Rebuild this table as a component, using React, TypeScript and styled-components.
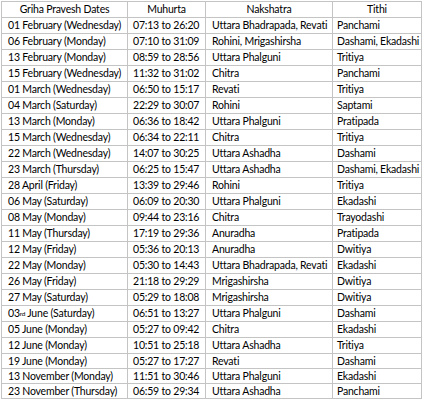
import React from 'react';
import styled, { createGlobalStyle } from 'styled-components';

const GlobalStyle = createGlobalStyle`
    html, body {
        margin: 0;
        padding: 0;
        background: #fff;
    }
    body {
        font-family: Lato, "Open Sans", "Liberation Sans", sans-serif;
    }
`;

const LINE_COLOR = '#c4c4c4';

const Page = styled.div`
    padding: 1px 0 0 1px;
`;

const Grid = styled.div`
    display: grid;
    grid-template-columns: 125px 77px 126px 88px;
    grid-template-rows: repeat(22, 15px) repeat(3, 14px);
    gap: 1px;
    padding: 1px;
    width: max-content;
    background-color: ${LINE_COLOR};
`;

type CellProps = {
    $pad: number;
};

const Cell = styled.div<CellProps>`
    display: flex;
    align-items: center;
    padding-left: ${(props) => props.$pad}px;
    background-color: #fff;
    color: #000;
    font-size: 10.5px;
    letter-spacing: -0.2px;
    line-height: 1;
    white-space: nowrap;
    overflow: hidden;
`;

const HeaderCell = styled(Cell)`
    justify-content: center;
    padding-left: 0;
`;

const Sup = styled.sup`
    font-size: 6.5px;
    line-height: 0;
    vertical-align: 3px;
    margin-right: 2px;
`;

type Row = {
    date: React.ReactNode;
    muhurta: string;
    nakshatra: string;
    tithi: string;
};

const ROWS: Row[] = [
    { date: '01 February (Wednesday)', muhurta: '07:13 to 26:20', nakshatra: 'Uttara Bhadrapada, Revati', tithi: 'Panchami' },
    { date: '06 February (Monday)', muhurta: '07:10 to 31:09', nakshatra: 'Rohini, Mrigashirsha', tithi: 'Dashami, Ekadashi' },
    { date: '13 February (Monday)', muhurta: '08:59 to 28:56', nakshatra: 'Uttara Phalguni', tithi: 'Tritiya' },
    { date: '15 February (Wednesday)', muhurta: '11:32 to 31:02', nakshatra: 'Chitra', tithi: 'Panchami' },
    { date: '01 March (Wednesday)', muhurta: '06:50 to 15:17', nakshatra: 'Revati', tithi: 'Tritiya' },
    { date: '04 March (Saturday)', muhurta: '22:29 to 30:07', nakshatra: 'Rohini', tithi: 'Saptami' },
    { date: '13 March (Monday)', muhurta: '06:36 to 18:42', nakshatra: 'Uttara Phalguni', tithi: 'Pratipada' },
    { date: '15 March (Wednesday)', muhurta: '06:34 to 22:11', nakshatra: 'Chitra', tithi: 'Tritiya' },
    { date: '22 March (Wednesday)', muhurta: '14:07 to 30:25', nakshatra: 'Uttara Ashadha', tithi: 'Dashami' },
    { date: '23 March (Thursday)', muhurta: '06:25 to 15:47', nakshatra: 'Uttara Ashadha', tithi: 'Dashami, Ekadashi' },
    { date: '28 April (Friday)', muhurta: '13:39 to 29:46', nakshatra: 'Rohini', tithi: 'Tritiya' },
    { date: '06 May (Saturday)', muhurta: '06:09 to 20:30', nakshatra: 'Uttara Phalguni', tithi: 'Ekadashi' },
    { date: '08 May (Monday)', muhurta: '09:44 to 23:16', nakshatra: 'Chitra', tithi: 'Trayodashi' },
    { date: '11 May (Thursday)', muhurta: '17:19 to 29:36', nakshatra: 'Anuradha', tithi: 'Pratipada' },
    { date: '12 May (Friday)', muhurta: '05:36 to 20:13', nakshatra: 'Anuradha', tithi: 'Dwitiya' },
    { date: '22 May (Monday)', muhurta: '05:30 to 14:43', nakshatra: 'Uttara Bhadrapada, Revati', tithi: 'Ekadashi' },
    { date: '26 May (Friday)', muhurta: '21:18 to 29:29', nakshatra: 'Mrigashirsha', tithi: 'Dwitiya' },
    { date: '27 May (Saturday)', muhurta: '05:29 to 18:08', nakshatra: 'Mrigashirsha', tithi: 'Dwitiya' },
    { date: <>03<Sup>rd</Sup>June (Saturday)</>, muhurta: '06:51 to 13:27', nakshatra: 'Uttara Phalguni', tithi: 'Dashami' },
    { date: '05 June (Monday)', muhurta: '05:27 to 09:42', nakshatra: 'Chitra', tithi: 'Ekadashi' },
    { date: '12 June (Monday)', muhurta: '10:51 to 25:18', nakshatra: 'Uttara Ashadha', tithi: 'Tritiya' },
    { date: '19 June (Monday)', muhurta: '05:27 to 17:27', nakshatra: 'Revati', tithi: 'Dashami' },
    { date: '13 November (Monday)', muhurta: '11:51 to 30:46', nakshatra: 'Uttara Phalguni', tithi: 'Ekadashi' },
    { date: '23 November (Thursday)', muhurta: '06:59 to 29:34', nakshatra: 'Uttara Ashadha', tithi: 'Panchami' }
];

const App: React.FC = () => {
    return (
        <Page>
            <GlobalStyle />
            <Grid>
                <HeaderCell $pad={0}>Griha Pravesh Dates</HeaderCell>
                <HeaderCell $pad={0}>Muhurta</HeaderCell>
                <HeaderCell $pad={0}>Nakshatra</HeaderCell>
                <HeaderCell $pad={0}>Tithi</HeaderCell>

                {ROWS.map((row, i) => (
                    <React.Fragment key={i}>
                        <Cell $pad={6}>{row.date}</Cell>
                        <Cell $pad={5}>{row.muhurta}</Cell>
                        <Cell $pad={6}>{row.nakshatra}</Cell>
                        <Cell $pad={4}>{row.tithi}</Cell>
                    </React.Fragment>
                ))}
            </Grid>
        </Page>
    );
};

export default App;
